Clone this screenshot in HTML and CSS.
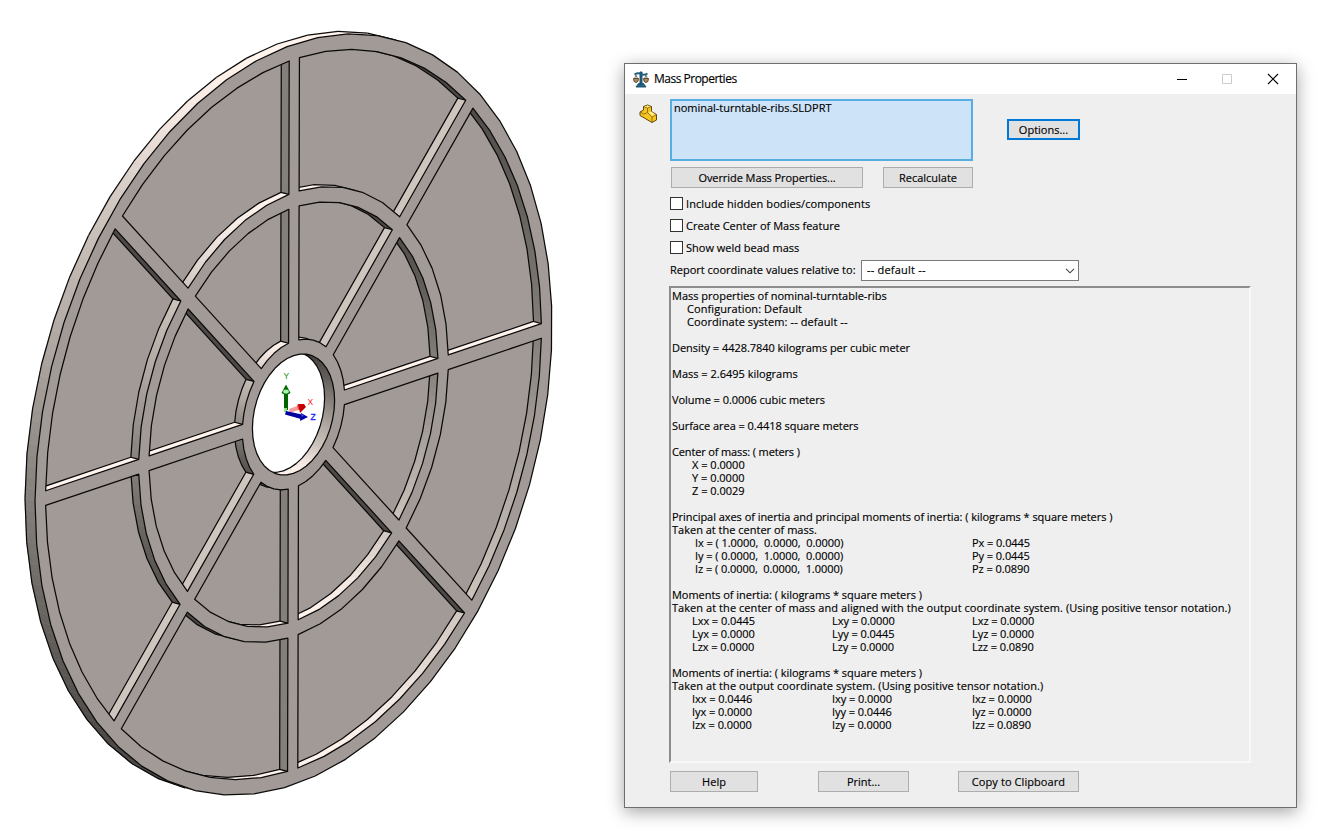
FILE: index.html
```html
<!DOCTYPE html>
<html lang="en">
<head>
<meta charset="utf-8">
<title>Mass Properties</title>
<link rel="stylesheet" href="styles.css">
</head>
<body>
<main class="desktop">
  <svg class="viewport" width="600" height="831" viewBox="0 0 600 831">
    <g id="part"></g>
    <g class="triad">
      <path d="M289 409l11-4 1 4-11 4z" fill="#f79a9a"/>
      <path d="M297 405l3-1 1 5-3 1z" fill="#ff4b4b"/>
      <path d="M298 404l6 0 2 3-6 6z" fill="#c40000"/>
      <path d="M284 392h4v18h-4z" fill="#006400"/>
      <path d="M284 408h3v4h-3z" fill="#8fe08f"/>
      <path d="M281.500 393l4.500-8.500 4.500 8.500q-4.500 3-9 0z" fill="#006a00"/>
      <ellipse cx="286" cy="391.500" rx="2.800" ry="2" fill="#a6f5a6"/>
      <path d="M286 411l16 3.500-1 4.500-16-4.500z" fill="#0000a0"/>
      <path d="M301 413l7 4-8 4z" fill="#0000a8"/>
      <path d="M301 414l3 1-2 2z" fill="#4646d8"/>
      <text x="283.500" y="379" fill="#1c8c1c">Y</text>
      <text x="307.500" y="405" fill="#ff2020">X</text>
      <text x="310.500" y="420" fill="#2020ff" stroke="#2020ff" stroke-width=".3">Z</text>
    </g>
  </svg>

  <section class="dialog">
    <header class="titlebar">
      <svg class="app-icon" width="16" height="17" viewBox="0 0 16 17">
        <path d="M7 1h2v12H7zM5.500 12.500h5l2.500 3.500H3z" fill="#1f6585" stroke="#174a63" stroke-width=".9"/>
        <path d="M1.500 3.500q3.500-2 6.500-.5t6.500-.5" fill="none" stroke="#1f5f80" stroke-width="2"/>
        <path d="M3 4L1 9M3 4l2 5M13 4l-2 5M13 4l2 5" stroke="#555" stroke-width=".8"/>
        <path d="M.5 7.500h5q0 4-2.500 4T.5 7.500zM10.500 7.500h5q0 4-2.500 4t-2.500-4z" fill="#b98a4a" stroke="#3c3327" stroke-width=".8"/>
      </svg>
      <h1 class="title">Mass Properties</h1>
      <svg class="caption" width="106" height="12" viewBox="0 0 106 12">
        <path d="M1 6.500h10" stroke="#000"/>
        <path d="M46.500 1.500h9v9h-9z" fill="none" stroke="#ccc"/>
        <path d="M92 1l10 10M102 1L92 11" stroke="#000" stroke-width="1.100"/>
      </svg>
    </header>

    <div class="body">
      <div class="top-row">
        <svg class="part-icon" width="20" height="20" viewBox="0 0 20 20">
          <path d="M1 8l3.500-2V2.500L8.500 1l4 1.500v5l5 3v5.500l-4.500 2.500-6-3.500-6-3.500z" fill="#f6c41c" stroke="#5d4a10" stroke-linejoin="round"/>
          <path d="M4.500 2.500L8.500 4l4-1.500M8.500 4v4.500l4.500 4.500 4.500-2.500M13 13v5.500M1 8l4 2.200 3.500-1.700" fill="none" stroke="#7a6013" stroke-width=".8"/>
          <path d="M5.500 2.500l3-1.100 3 1.100-3 1zM9.500 8.500l2.800-1 4 3-3.300 1.700z" fill="#ffe88a"/>
        </svg>
        <div class="left-col">
          <div class="selection"><span class="sel-text">nominal-turntable-ribs.SLDPRT</span></div>
          <div class="button-row">
            <button class="btn override"><span>Override Mass Properties...</span></button>
            <button class="btn recalc"><span>Recalculate</span></button>
          </div>
        </div>
        <button class="btn options"><span>Options...</span></button>
      </div>

      <div class="checks">
        <label class="check"><i class="box"></i><span class="wide">Include hidden bodies/components</span></label>
        <label class="check"><i class="box"></i><span>Create Center of Mass feature</span></label>
        <label class="check"><i class="box"></i><span>Show weld bead mass</span></label>
      </div>

      <div class="relative-row">
        <span class="relative-label">Report coordinate values relative to:</span>
        <div class="select"><span class="choice">-- default --</span>
          <svg width="10" height="6" viewBox="0 0 10 6"><path d="M1 .8l4 4 4-4" fill="none" stroke="#444" stroke-width="1.100"/></svg>
        </div>
      </div>

      <div class="report">
        <p>Mass properties of nominal-turntable-ribs</p>
        <p class="in1 wide">Configuration: Default</p>
        <p class="in1 wide">Coordinate system: -- default --</p>
        <p class="gap tight">Density = 4428.7840 kilograms per cubic meter</p>
        <p class="gap">Mass = 2.6495 kilograms</p>
        <p class="gap tight">Volume = 0.0006 cubic meters</p>
        <p class="gap tight">Surface area = 0.4418 square meters</p>
        <p class="gap tighter">Center of mass: ( meters )</p>
        <p class="in2">X = 0.0000</p>
        <p class="in2">Y = 0.0000</p>
        <p class="in2">Z = 0.0029</p>
        <p class="gap tight">Principal axes of inertia and principal moments of inertia: ( kilograms * square meters )</p>
        <p>Taken at the center of mass.</p>
        <div class="axes">
          <p>Ix = ( 1.0000,  0.0000,  0.0000)</p><p>Px = 0.0445</p>
          <p>Iy = ( 0.0000,  1.0000,  0.0000)</p><p>Py = 0.0445</p>
          <p>Iz = ( 0.0000,  0.0000,  1.0000)</p><p>Pz = 0.0890</p>
        </div>
        <p class="gap tight">Moments of inertia: ( kilograms * square meters )</p>
        <p class="long">Taken at the center of mass and aligned with the output coordinate system. (Using positive tensor notation.)</p>
        <div class="tensor">
          <p>Lxx = 0.0445</p><p>Lxy = 0.0000</p><p>Lxz = 0.0000</p>
          <p>Lyx = 0.0000</p><p>Lyy = 0.0445</p><p>Lyz = 0.0000</p>
          <p>Lzx = 0.0000</p><p>Lzy = 0.0000</p><p>Lzz = 0.0890</p>
        </div>
        <p class="gap tight">Moments of inertia: ( kilograms * square meters )</p>
        <p class="long">Taken at the output coordinate system. (Using positive tensor notation.)</p>
        <div class="tensor">
          <p>Ixx = 0.0446</p><p>Ixy = 0.0000</p><p>Ixz = 0.0000</p>
          <p>Iyx = 0.0000</p><p>Iyy = 0.0446</p><p>Iyz = 0.0000</p>
          <p>Izx = 0.0000</p><p>Izy = 0.0000</p><p>Izz = 0.0890</p>
        </div>
      </div>

      <footer class="actions">
        <button class="btn help"><span>Help</span></button>
        <button class="btn print"><span>Print...</span></button>
        <button class="btn copy"><span>Copy to Clipboard</span></button>
      </footer>
    </div>
  </section>
</main>
<script src="part.js"></script>
</body>
</html>
```
FILE: styles.css
```css
* { box-sizing: border-box; }
body {
  margin: 0;
  background: #fff;
  color: #000;
  font: 11px/13px "Open Sans", "Noto Sans", sans-serif;
}
p, h1 { margin: 0; font-weight: 400; }
.desktop {
  display: flex;
  align-items: flex-start;
  width: 1321px;
  height: 831px;
  overflow: hidden;
}
.viewport { display: block; flex: none; }
.triad text { font: 8.5px "Liberation Sans", Arial, sans-serif; }

.dialog {
  flex: none;
  width: 673px;
  height: 745px;
  margin: 63px 0 0 24px;
  border: 1px solid #6e6e6e;
  background: #efefef;
  box-shadow: 0 4px 16px rgba(0, 0, 0, .36);
  -webkit-text-stroke: .15px #000;
}
.titlebar {
  display: flex;
  align-items: center;
  height: 30px;
  padding: 0 14px 0 8px;
  background: #fff;
}
.title { margin-left: 5px; font-size: 12px; line-height: 16px; letter-spacing: -.5px; }
.caption { margin-left: auto; }
.body { padding: 5px 45px 0; }
.top-row { display: flex; margin-left: -31px; }
.part-icon { flex: none; margin: 5px 11px 0 0; }
.left-col { width: 303px; }
.selection {
  height: 62px;
  padding: 0 2px;
  border: 2px solid #58aee3;
  background: #cde3f8;
}
.sel-text { display: block; letter-spacing: -.02px; }
.button-row { display: flex; justify-content: space-between; margin: 6px 0 0 1px; }
.btn {
  display: block;
  height: 21px;
  padding: 0;
  border: 1px solid #adadad;
  border-radius: 0;
  background: #e1e1e1;
  color: #000;
  font: inherit;
  text-align: center;
}
.override { width: 192px; letter-spacing: -.07px; }
.recalc { width: 90px; }
.options { width: 73px; margin: 20px 0 0 34px; border: 2px solid #0078d7; }
.checks { display: grid; gap: 9px; margin-top: 9px; }
.check { display: flex; align-items: center; height: 13px; }
.box { width: 13px; height: 13px; margin-right: 3px; border: 1px solid #333; background: #fff; }
.relative-row { display: flex; align-items: center; height: 21px; margin-top: 6px; }
.relative-label { width: 191px; padding-bottom: 2px; white-space: nowrap; }
.select {
  display: flex;
  align-items: center;
  justify-content: space-between;
  width: 218px;
  height: 21px;
  padding: 0 3px 0 5px;
  border: 1px solid #7a7a7a;
  background: #fff;
}
.choice { padding-bottom: 2px; letter-spacing: .2px; }
.report {
  width: 582px;
  height: 477px;
  margin: 5px 0 0 -1px;
  padding: 1px 0 0 1px;
  border: 2px solid;
  border-color: #8c8c8c #f8f8f8 #f8f8f8 #8c8c8c;
}
.report p { white-space: pre; }
.gap { margin-top: 13px; }
.tight { letter-spacing: -.045px; }
.tighter { letter-spacing: -.14px; }
.wide { letter-spacing: .08px; }
.long { letter-spacing: .055px; }
.in1 { padding-left: 15px; }
.in2 { padding-left: 20px; }
.axes { display: grid; grid-template-columns: 277px 140px; padding-left: 23px; letter-spacing: -.06px; }
.tensor { display: grid; grid-template-columns: repeat(3, 140px); padding-left: 20px; letter-spacing: -.06px; }
.actions { display: flex; margin-top: 8px; }
.help { width: 88px; }
.print { width: 91px; margin-left: 60px; }
.copy { width: 121px; margin-left: 49px; letter-spacing: .08px; }
```
FILE: part.js
```js
// Ribbed turntable: a unit disc projected orthographically.
const CENTER = [293.5, 414.5];
const AXIS_U = [258.5, -87.2];
const AXIS_V = [0.85, -370.5];
const RIM_DEPTH = [-10, -2.6];
const POCKET_DEPTH = [-7.9, -2.1];
const FACE = '#a29a97';
const RAD = Math.PI / 180;
const part = document.getElementById('part');

const project = ([u, v], shift = [0, 0]) => [
  CENTER[0] + u * AXIS_U[0] + v * AXIS_V[0] + shift[0],
  CENTER[1] + u * AXIS_U[1] + v * AXIS_V[1] + shift[1],
];
const polar = (r, deg) => [r * Math.cos(deg * RAD), r * Math.sin(deg * RAD)];
const fmt = pts => pts.map(p => p.map(n => n.toFixed(2)).join(',')).join(' ');

function add(parent, tag, attrs) {
  const el = document.createElementNS('http://www.w3.org/2000/svg', tag);
  for (const k in attrs) el.setAttribute(k, attrs[k]);
  parent.appendChild(el);
  return el;
}
const LINE = { stroke: '#0b0a0a', 'stroke-width': 1.25, 'stroke-linejoin': 'round' };

// Wall colour by the direction its normal faces, in degrees.
const SHADES = [
  [0, 130, 124, 120], [60, 255, 243, 236], [100, 255, 243, 236], [115, 245, 233, 227],
  [135, 206, 197, 190], [157, 174, 166, 160], [180, 132, 127, 122], [203, 98, 94, 90],
  [225, 76, 73, 70], [270, 62, 60, 58], [360, 130, 124, 120],
];
function shade(deg) {
  const d = ((deg % 360) + 360) % 360;
  const i = SHADES.findIndex(s => s[0] >= d) || 1;
  const a = SHADES[i - 1], b = SHADES[i], t = (d - a[0]) / (b[0] - a[0]);
  return `rgb(${[1, 2, 3].map(k => Math.round(a[k] + (b[k] - a[k]) * t)).join(',')})`;
}

function wall(parent, p, q, n0, n1, depth) {
  const steps = n0 === n1 ? 1 : 4;
  const mix = t => [p[0] + (q[0] - p[0]) * t, p[1] + (q[1] - p[1]) * t];
  for (let i = 0; i < steps; i++) {
    const a = mix(i / steps), b = mix((i + 1) / steps);
    const color = shade(n0 + (n1 - n0) * (i + 0.5) / steps);
    add(parent, 'polygon', {
      points: fmt([project(a), project(b), project(b, depth), project(a, depth)]),
      fill: color, stroke: color, 'stroke-width': 0.6,
    });
  }
}

// Rim
const N = 53;
const ring = (n, phase) => Array.from({ length: n }, (_, i) => phase + i * 360 / n);
const rim = ring(N, 3.3);
const facing = deg => Math.cos(deg * RAD) * -0.0387 + Math.sin(deg * RAD) * 0.0161 > 0;
rim.forEach(a => {
  const b = a + 360 / N;
  if (!facing((a + b) / 2)) return;
  wall(part, polar(1, a), polar(1, b), a, b, RIM_DEPTH);
});
rim.forEach(a => {
  const b = a + 360 / N;
  if (!facing((a + b) / 2)) return;
  add(part, 'polyline', { points: fmt([project(polar(1, a), RIM_DEPTH), project(polar(1, b), RIM_DEPTH)]), fill: 'none', ...LINE });
});
add(part, 'polygon', { points: fmt(rim.map(a => project(polar(1, a)))), fill: FACE, ...LINE });

let clipId = 0;
function clipGroup(points) {
  const id = 'clip' + clipId++;
  add(add(part, 'clipPath', { id }), 'polygon', { points });
  return add(part, 'g', { 'clip-path': `url(#${id})` });
}

// Pockets between the ribs
const HALF = 0.0198;
function pocket(rIn, rOut, k, nIn, nOut) {
  const base = k * 45;
  const o = Math.asin(HALF / rOut) / RAD, i = Math.asin(HALF / rIn) / RAD;
  const pts = [], normals = [];
  for (let s = 0; s <= nOut; s++) {
    const a = base + o + (45 - 2 * o) * s / nOut;
    pts.push(polar(rOut, a));
    normals.push(a + 180);
  }
  for (let s = 0; s <= nIn; s++) {
    const a = base + 45 - i - (45 - 2 * i) * s / nIn;
    pts.push(polar(rIn, a));
    normals.push(a);
  }
  const outline = fmt(pts.map(p => project(p)));
  const g = clipGroup(outline);
  add(g, 'polygon', { points: outline, fill: FACE });
  pts.forEach((p, j) => {
    const q = pts[(j + 1) % pts.length];
    let n0 = normals[j], n1 = normals[(j + 1) % pts.length];
    if (j === nOut) n0 = n1 = base + 45 - 90;
    if (j === pts.length - 1) n0 = n1 = base + 90;
    wall(g, p, q, n0, n1, POCKET_DEPTH);
  });
  add(g, 'polygon', { points: fmt(pts.map(p => project(p, POCKET_DEPTH))), fill: FACE, ...LINE });
  [0, nOut, nOut + 1, pts.length - 1].forEach(j => {
    add(g, 'polyline', { points: fmt([project(pts[j]), project(pts[j], POCKET_DEPTH)]), ...LINE });
  });
  add(part, 'polygon', { points: outline, fill: 'none', ...LINE });
}
for (let k = 0; k < 8; k++) {
  pocket(0.599, 0.959, k, 5, 7);
  pocket(0.198, 0.559, k, 4, 5);
}

// Centre bore
const bore = ring(40, 0);
const boreOutline = fmt(bore.map(a => project(polar(0.159, a))));
const boreGroup = clipGroup(boreOutline);
bore.forEach(a => wall(boreGroup, polar(0.159, a), polar(0.159, a + 9), a + 180, a + 189, RIM_DEPTH));
add(boreGroup, 'polygon', { points: fmt(bore.map(a => project(polar(0.159, a), RIM_DEPTH))), fill: '#fff', ...LINE });
add(part, 'polygon', { points: boreOutline, fill: 'none', ...LINE });
```
